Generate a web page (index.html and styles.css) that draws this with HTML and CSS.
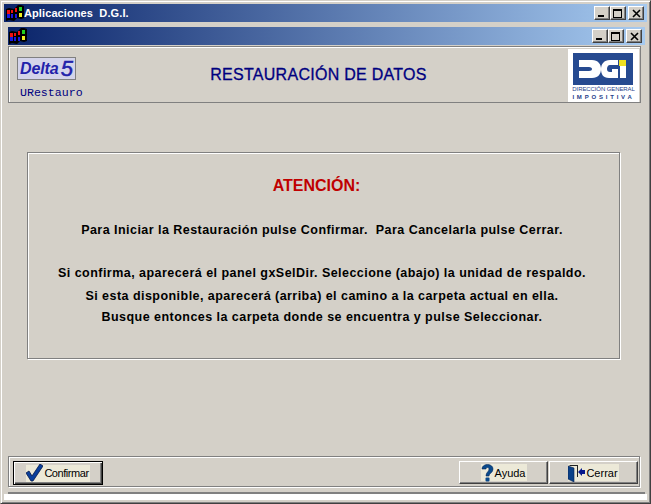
FILE: index.html
```html
<!DOCTYPE html>
<html lang="es">
<head>
<meta charset="utf-8">
<title>Aplicaciones D.G.I.</title>
<link rel="stylesheet" href="styles.css">
</head>
<body>
<svg class="defs" width="0" height="0"><defs><g id="logo">
  <path d="M0 4l3-1 5 1 1-1 3-3h3l3 1v12l-3 1-4-1-3 3-5-1-3 1z" fill="#000"/>
  <rect x="1" y="5" width="3" height="4" fill="#f01010"/><rect x="5" y="5" width="2" height="3" fill="#f01010"/>
  <rect x="1" y="9" width="3" height="4" fill="#1818e0"/><rect x="5" y="9" width="2" height="4" fill="#1818e0"/>
  <rect x="9" y="3" width="2" height="4" fill="#f01010"/><rect x="13" y="2" width="3" height="4" fill="#20d020"/>
  <rect x="9" y="9" width="2" height="4" fill="#1818e0"/><rect x="13" y="8" width="3" height="4" fill="#f0f020"/>
</g></defs></svg>
<div class="window">
  <div class="titlebar">
    <svg class="winlogo" width="18" height="16" viewBox="0 0 18 16"><use href="#logo"/></svg>
    <span class="title-text">Aplicaciones&nbsp; D.G.I.</span>
    <div class="caps">
      <span class="cap"><i class="min"></i></span><span class="cap cap-gap"><i class="max"></i></span>
      <span class="cap"><svg width="9" height="9" viewBox="0 0 9 9"><path d="M1 1l7 7M8 1l-7 7" stroke="#000" stroke-width="1.6"/></svg></span>
    </div>
  </div>
  <div class="client">
    <div class="child">
      <div class="titlebar inner-title">
        <svg class="winlogo" width="18" height="16" viewBox="0 0 18 16"><use href="#logo"/></svg>
        <div class="caps">
          <span class="cap"><i class="min"></i></span><span class="cap cap-gap"><i class="max"></i></span>
          <span class="cap"><svg width="9" height="9" viewBox="0 0 9 9"><path d="M1 1l7 7M8 1l-7 7" stroke="#000" stroke-width="1.6"/></svg></span>
        </div>
      </div>
      <div class="form">
        <header class="head">
          <div class="head-left">
            <div class="delta"><span class="delta-word">Delta</span><span class="delta-num">5</span></div>
            <div class="unit">URestauro</div>
          </div>
          <h1 class="form-title">RESTAURACIÓN DE DATOS</h1>
          <div class="dgi">
            <svg width="71" height="53" viewBox="0 0 71 53">
              <rect x="5" y="4" width="60" height="32" fill="#264a90"/>
              <path d="M11 11h13c6 0 9 4 9 9s-3 9-9 9H11v-7h10c2 0 3-1 3-2s-1-2-3-2H11z" fill="#fff"/>
              <path d="M50 11v5h-8c-2 0-3 2-3 4s1 3 3 3h2v-3h6v9h-9c-6 0-8-4-8-9s3-9 9-9z" fill="#fff"/>
              <rect x="52" y="17" width="6" height="12" fill="#fff"/>
              <rect x="51" y="11" width="7" height="6" fill="#f0e020"/>
            </svg>
            <span class="dgi-a">DIRECCIÓN GENERAL</span>
            <span class="dgi-b">IMPOSITIVA</span>
          </div>
        </header>
        <main class="body">
          <section class="notice">
            <h2 class="atencion">ATENCIÓN:</h2>
            <p class="line-a">Para Iniciar la Restauración pulse Confirmar.&nbsp; Para Cancelarla pulse Cerrar.</p>
            <p class="line-b">Si confirma, aparecerá el panel gxSelDir. Seleccione (abajo) la unidad de respaldo.</p>
            <p class="line-c">Si esta disponible, aparecerá (arriba) el camino a la carpeta actual en ella.</p>
            <p class="line-d">Busque entonces la carpeta donde se encuentra y pulse Seleccionar.</p>
          </section>
        </main>
        <footer class="foot">
          <button class="btn btn-default"><span class="btn-in">
            <svg width="17" height="18" viewBox="0 0 17 18"><path d="M0 9l3-2 3 5L14 0l3 2L7 17H5z" fill="#0a3f9c" stroke="#04184a" stroke-width=".8"/></svg>
            <span class="btn-tight">Confirmar</span></span></button>
          <div class="btn-right">
            <button class="btn"><span class="btn-in">
              <svg width="13" height="18" viewBox="0 0 13 18"><path d="M1 5c0-6 11-6 11 0 0 4-4 4-4 7H5c0-4 3-4 3-7 0-2-3-2-3 0z" fill="#0a4a8c" stroke="#062a5c" stroke-width=".6"/><rect x="4.500" y="13.500" width="4" height="4" rx="1" fill="#0a4a8c"/></svg>
              <span>Ayuda</span></span></button>
            <button class="btn"><span class="btn-in">
              <svg width="17" height="18" viewBox="0 0 17 18"><path d="M1 1h9v12H9V2H2z" fill="#222"/><path d="M0 2l6 2v14l-6-3z" fill="#0a4088" stroke="#052050" stroke-width=".6"/><path d="M10 8l4-4v8z" fill="#06188c"/><rect x="13" y="6" width="4" height="4" fill="#06188c"/></svg>
              <span>Cerrar</span></span></button>
          </div>
        </footer>
      </div>
    </div>
  </div>
  <div class="statusbar"></div>
</div>
</body>
</html>
```
FILE: styles.css
```css
* { box-sizing: border-box; }
html, body { margin: 0; padding: 0; }
body { width: 651px; height: 504px; overflow: hidden; background: #d4d0c8; font-family: "Liberation Sans", Arial, sans-serif; }
.defs { position: absolute; }
.window { width: 651px; height: 504px; display: flex; flex-direction: column; padding: 3px; background: #d4d0c8; border: 1px solid; border-color: #d4d0c8 #404040 #404040 #d4d0c8; box-shadow: inset 1px 1px 0 #fff, inset -1px -1px 0 #808080; }
.titlebar { display: flex; align-items: center; flex: none; height: 18px; background: linear-gradient(90deg, #0a246a, #a6caf0); }
.winlogo { flex: none; margin-left: 2px; }
.title-text { color: #fff; font: bold 11px "Liberation Sans", sans-serif; letter-spacing: .1px; }
.caps { margin-left: auto; display: flex; margin-right: 3px; }
.cap { width: 16px; height: 14px; background: #d4d0c8; border: 1px solid; border-color: #fff #404040 #404040 #fff; box-shadow: inset -1px -1px 0 #808080; position: relative; display: flex; align-items: center; justify-content: center; }
.cap-gap { margin-right: 2px; }
.min { position: absolute; left: 3px; bottom: 2px; width: 6px; height: 2px; background: #000; }
.max { display: block; width: 9px; height: 9px; border: 1px solid #000; border-top-width: 2px; margin-right: 1px; }
.client { flex: 1; min-height: 0; padding: 5px 2px 0 4px; display: flex; }
.child { flex: 1; min-width: 0; display: flex; flex-direction: column; border-bottom: 2px solid #808080; }
.inner-title .winlogo { margin-left: 1px; }
.form { flex: 1; display: flex; flex-direction: column; min-height: 0; margin-top: 1px; }
.head { flex: none; height: 57px; display: flex; margin-right: 4px; border: 1px solid #808080; box-shadow: inset 1px 1px 0 #fff; }
.head-left { flex: none; width: 150px; padding: 10px 0 0 8px; }
.delta { width: 59px; height: 23px; border: 1px solid #808080; background: #d4d4ea; display: flex; align-items: center; padding-left: 2px; color: #2222aa; font-style: italic; font-weight: bold; }
.delta-word { font-size: 16px; letter-spacing: -.1px; }
.delta-num { font-size: 22px; margin-left: 2px; font-weight: 400; -webkit-text-stroke: .5px #2222aa; }
.unit { margin-top: 6px; margin-left: 3px; font: 11.600px "Liberation Mono", monospace; color: #000080; }
.form-title { flex: 1; margin: 0; padding: 18px 90px 0 0; text-align: center; font: 16px/20px "Liberation Sans", sans-serif; letter-spacing: .28px; color: #000080; -webkit-text-stroke: .3px #000080; }
.dgi { flex: none; width: 71px; height: 53px; margin: 2px 1px 0 0; position: relative; background: #fff; }
.dgi svg { display: block; }
.dgi-a, .dgi-b { position: absolute; left: 0; right: 0; text-align: center; color: #26408a; white-space: nowrap; font-family: "Liberation Sans", sans-serif; }
.dgi-a { top: 37px; font-size: 6px; line-height: 7px; letter-spacing: -.1px; }
.dgi-b { top: 45px; font-size: 6px; line-height: 7px; font-weight: bold; letter-spacing: 2.8px; }
.body { flex: 1; min-height: 0; padding: 49px 25px 0 19px; }
.notice { height: 207px; border: 1px solid #808080; box-shadow: inset 1px 1px 0 #fff, 1px 1px 0 #fff; text-align: center; padding: 24px 3px 0 0; }
.atencion { margin: 0 11px 27px 0; font: bold 16px/18px "Liberation Sans", sans-serif; color: #c00000; }
.notice p { margin: 0; font: bold 12.500px/16px "Liberation Sans", sans-serif; letter-spacing: .46px; color: #000; white-space: nowrap; }
.notice .line-b { margin-top: 27px; }
.notice .line-c { margin-top: 7px; }
.notice .line-d { margin-top: 5px; }
.foot { flex: none; height: 31px; margin: 0 5px 5px 0; display: flex; justify-content: space-between; align-items: flex-start; border: 1px solid #808080; box-shadow: inset 1px 1px 0 #fff, 1px 1px 0 #fff; padding: 4px 1px 0 4px; }
.btn-right { display: flex; gap: 1px; }
.btn { width: 89px; height: 23px; padding: 0; background: #d4d0c8; border: 1px solid; border-color: #fff #404040 #404040 #fff; box-shadow: inset -1px -1px 0 #808080; font: 11px "Liberation Sans", sans-serif; color: #000; display: flex; align-items: center; justify-content: center; }
.btn-in { display: flex; align-items: center; gap: 1px; background: #ece9d8; height: 17px; padding-right: 1px; }
.btn-tight { letter-spacing: -.45px; }
.btn-default { width: 90px; height: 24px; border-color: #000; box-shadow: inset 1px 1px 0 #fff, inset -1px -1px 0 #404040, inset -2px -2px 0 #808080; }
.statusbar { flex: none; height: 6px; background: #fff; }
```
